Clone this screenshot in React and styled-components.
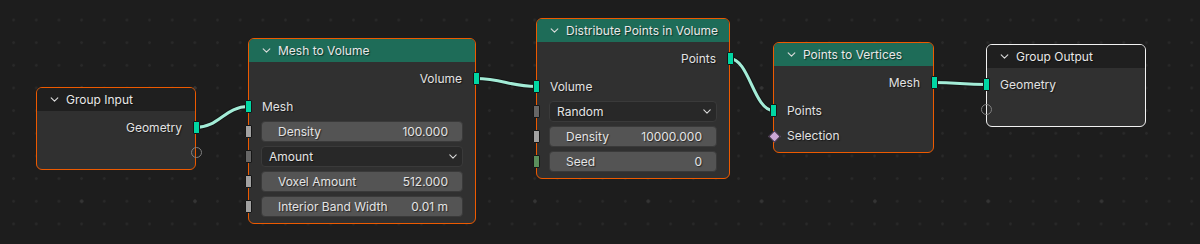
import React from 'react';
import styled, { createGlobalStyle } from 'styled-components';

const GlobalStyle = createGlobalStyle`
  html, body {
    margin: 0;
    padding: 0;
    background: #1d1d1d;
  }
  body {
    font-family: Inter, "DejaVu Sans", sans-serif;
  }
`;

const Canvas = styled.div`
  position: relative;
  width: 1200px;
  height: 244px;
  overflow: hidden;
  background-color: #1d1d1d;
  background-image:
    radial-gradient(circle, #353535 1.4px, transparent 2px),
    radial-gradient(circle, #292929 1.1px, transparent 1.6px);
  background-size: 113.333px 113.333px, 22.667px 22.667px;
  background-position: 25px 31.3px, 2.3px 8.7px;
`;

const Links = styled.svg`
  position: absolute;
  left: 0;
  top: 0;
`;

const Node = styled.div`
  position: absolute;
  left: ${({ $x }) => $x}px;
  top: ${({ $y }) => $y}px;
  width: ${({ $w }) => $w}px;
  box-sizing: border-box;
  border: 1px solid ${({ $active }) => ($active ? '#f2f2f2' : '#ed5a00')};
  border-radius: 6px;
  background: #303030;
  padding-bottom: 4px;
  color: #e2e2e2;
  font-size: 12px;
  text-shadow: 1px 1px 1px rgba(0, 0, 0, 0.55);
`;

const Header = styled.div`
  height: 23px;
  display: flex;
  align-items: center;
  gap: 7px;
  padding-left: 13px;
  border-radius: 5px 5px 0 0;
  background: ${({ $color }) => $color};
  color: #e8e8e8;
  font-size: 12px;
  white-space: nowrap;
`;

const Body = styled.div`
  padding-top: 4px;
  display: flex;
  flex-direction: column;
`;

const Row = styled.div`
  position: relative;
  height: 25px;
  display: flex;
  align-items: center;
  justify-content: ${({ $out }) => ($out ? 'flex-end' : 'flex-start')};
  padding: 0 13px;
  margin-top: ${({ $gap }) => ($gap ? 3 : 0)}px;
`;

const FieldRow = styled(Row)`
  padding: 0 12px;
`;

const socketColors = {
  geo: '#00d6a3',
  float: '#a1a1a1',
  menu: '#666666',
  int: '#5a8f5c',
  bool: '#cca6d6',
};

const Socket = styled.span`
  position: absolute;
  top: 50%;
  ${({ $out }) => ($out ? 'right: -4.5px;' : 'left: -4.5px;')}
  width: 5px;
  height: 11px;
  margin-top: -6.5px;
  border: 1px solid #161616;
  border-radius: 1px;
  background: ${({ $kind }) => socketColors[$kind]};
`;

const Diamond = styled.span`
  position: absolute;
  top: 50%;
  left: -4px;
  width: 7px;
  height: 7px;
  margin-top: -4px;
  border: 0.5px solid #2a2030;
  background: ${socketColors.bool};
  transform: rotate(45deg);
`;

const Virtual = styled.span`
  position: absolute;
  top: 50%;
  ${({ $out }) => ($out ? 'right: -6.5px;' : 'left: -6.5px;')}
  width: 9px;
  height: 9px;
  margin-top: -6px;
  border: 1.5px solid #808080;
  border-radius: 50%;
`;

const Field = styled.div`
  flex: 1;
  height: 21px;
  box-sizing: border-box;
  display: flex;
  align-items: center;
  justify-content: space-between;
  border: 1px solid #3a3a3a;
  border-radius: 4px;
  background: ${({ $menu }) => ($menu ? '#282828' : '#545454')};
  padding: ${({ $menu }) => ($menu ? '0 5px 0 7px' : '0 14px 0 16px')};
  color: #e4e4e4;
`;

const Chevron = ({ w = 9, h = 5 }) => (
  <svg width={w} height={h} viewBox="0 0 10 6" style={{ flex: 'none' }}>
    <path d="M1 1 L5 5 L9 1" fill="none" stroke="#dcdcdc" strokeWidth="1.3" strokeLinecap="round" strokeLinejoin="round" />
  </svg>
);

const link = (x0, y0, x3, y3) => {
  const d = Math.abs(x3 - x0) * 0.45;
  return `M${x0} ${y0} C${x0 + d} ${y0} ${x3 - d} ${y3} ${x3} ${y3}`;
};

const LINKS = [
  [195.5, 127.5, 248.5, 106.5],
  [475.5, 78.5, 536.5, 86.5],
  [729.5, 58.5, 773.5, 110.5],
  [933.5, 82.5, 986.5, 84.5],
];

const TEAL = '#1e6c58';
const GROUP = '#1f1f1f';

export default function App() {
  return (
    <>
      <GlobalStyle />
      <Canvas>
        <Links width="1200" height="244">
          {LINKS.map((l, i) => (
            <g key={i}>
              <path d={link(...l)} fill="none" stroke="rgba(0,0,0,0.35)" strokeWidth="5" />
              <path d={link(...l)} fill="none" stroke="#a3ecd7" strokeWidth="3" />
            </g>
          ))}
        </Links>

        <Node $x={36} $y={87} $w={160}>
          <Header $color={GROUP}><Chevron />Group Input</Header>
          <Body>
            <Row $out>Geometry<Socket $out $kind="geo" /></Row>
            <Row $out><Virtual $out /></Row>
          </Body>
        </Node>

        <Node $x={248} $y={38} $w={228}>
          <Header $color={TEAL}><Chevron />Mesh to Volume</Header>
          <Body>
            <Row $out>Volume<Socket $out $kind="geo" /></Row>
            <Row $gap>Mesh<Socket $kind="geo" /></Row>
            <FieldRow>
              <Socket $kind="float" />
              <Field><span>Density</span><span>100.000</span></Field>
            </FieldRow>
            <FieldRow>
              <Socket $kind="menu" />
              <Field $menu><span>Amount</span><Chevron w={8} h={5} /></Field>
            </FieldRow>
            <FieldRow>
              <Socket $kind="float" />
              <Field><span>Voxel Amount</span><span>512.000</span></Field>
            </FieldRow>
            <FieldRow>
              <Socket $kind="float" />
              <Field><span>Interior Band Width</span><span>0.01 m</span></Field>
            </FieldRow>
          </Body>
        </Node>

        <Node $x={536} $y={18} $w={194}>
          <Header $color={TEAL}><Chevron />Distribute Points in Volume</Header>
          <Body>
            <Row $out>Points<Socket $out $kind="geo" /></Row>
            <Row $gap>Volume<Socket $kind="geo" /></Row>
            <FieldRow>
              <Socket $kind="menu" />
              <Field $menu><span>Random</span><Chevron w={8} h={5} /></Field>
            </FieldRow>
            <FieldRow>
              <Socket $kind="float" />
              <Field><span>Density</span><span>10000.000</span></Field>
            </FieldRow>
            <FieldRow>
              <Socket $kind="int" />
              <Field><span>Seed</span><span>0</span></Field>
            </FieldRow>
          </Body>
        </Node>

        <Node $x={773} $y={42} $w={161}>
          <Header $color={TEAL}><Chevron />Points to Vertices</Header>
          <Body>
            <Row $out>Mesh<Socket $out $kind="geo" /></Row>
            <Row $gap>Points<Socket $kind="geo" /></Row>
            <Row>Selection<Diamond /></Row>
          </Body>
        </Node>

        <Node $x={986} $y={44} $w={160} $active>
          <Header $color={GROUP}><Chevron />Group Output</Header>
          <Body>
            <Row>Geometry<Socket $kind="geo" /></Row>
            <Row><Virtual /></Row>
          </Body>
        </Node>
      </Canvas>
    </>
  );
}
